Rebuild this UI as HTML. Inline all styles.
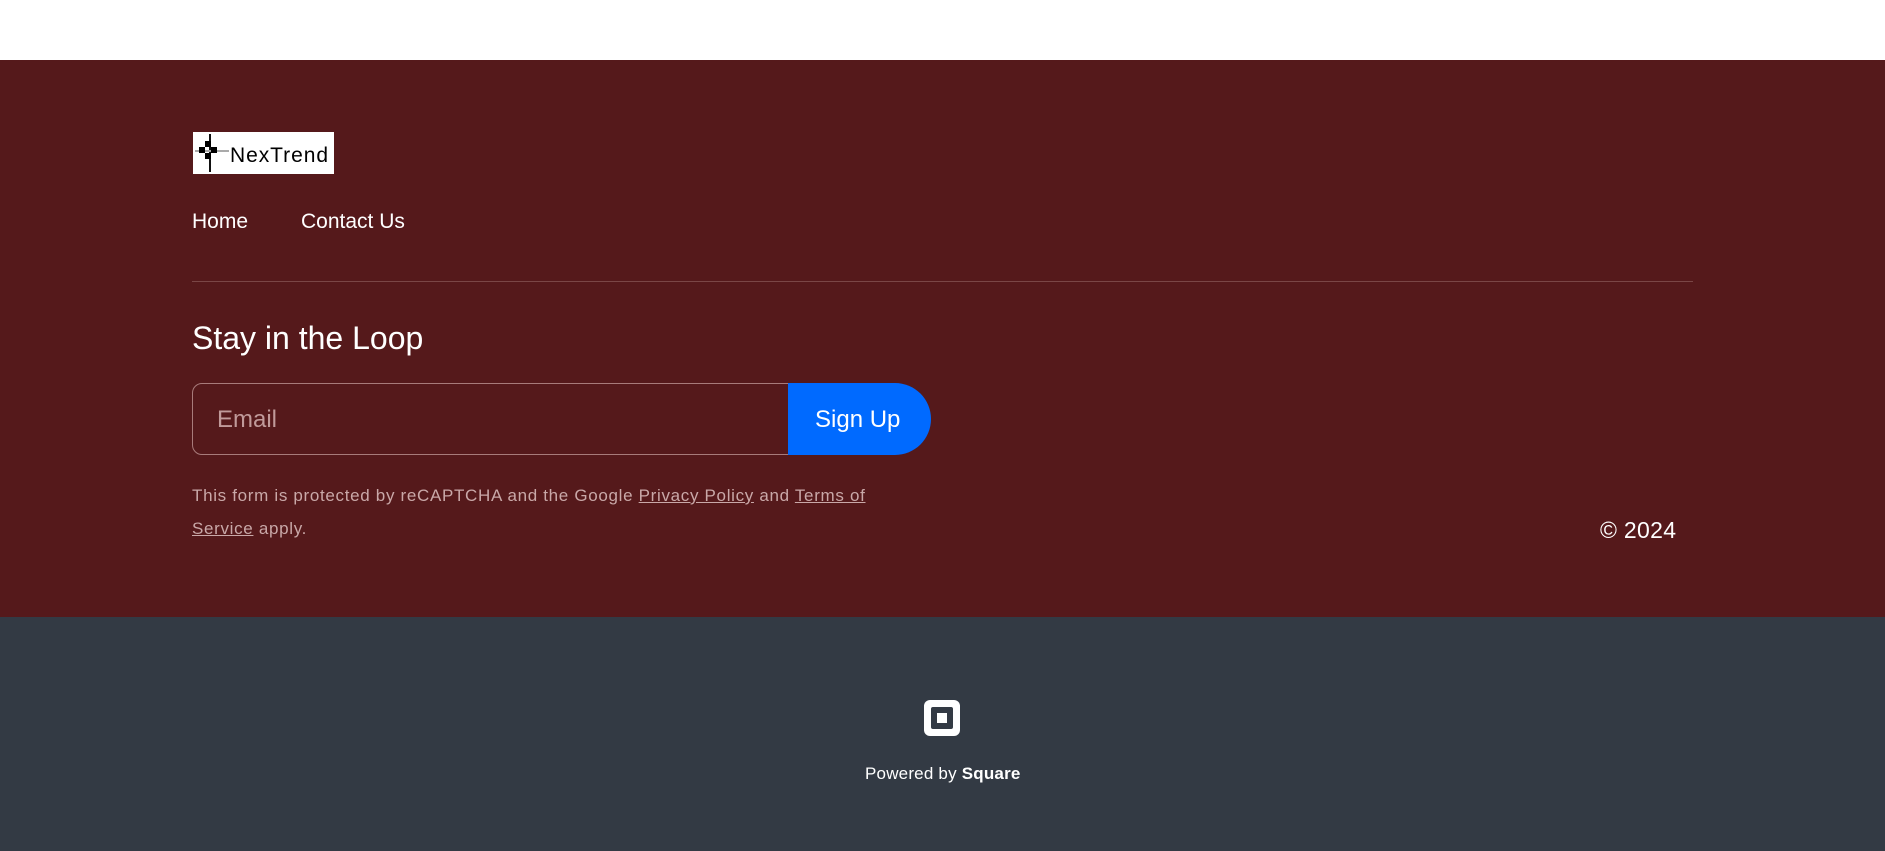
<!DOCTYPE html>
<html><head><meta charset="utf-8"><style>
*{margin:0;padding:0;box-sizing:border-box}
body{width:1885px;height:851px;background:#fff;font-family:"Liberation Sans",sans-serif;position:relative;overflow:hidden}
.red{position:absolute;top:60px;left:0;width:1885px;height:557px;background:#55191b}
.gray{position:absolute;top:617px;left:0;width:1885px;height:234px;background:#333a44}
.abs{position:absolute;white-space:nowrap}
.logo{left:193px;top:132px;width:141px;height:42px;background:#fff}
.nav{top:210px;font-size:21px;color:#fff}
.hr{left:192px;top:281px;width:1501px;height:1px;background:#7a4646}
.input{left:192px;top:383px;width:600px;height:72px;border:1px solid #a87b7b;border-radius:10px 0 0 10px}
.btn{left:788px;top:383px;width:143px;height:72px;background:#006aff;border-radius:0 36px 36px 0;color:#fff;font-size:24px;line-height:74px;padding-left:27px}
.small{font-size:17px;color:#c9a8a8;letter-spacing:0.68px}
.small u{text-decoration:underline}
</style></head><body>
<div class="red"></div><div class="gray"></div>
<div class="abs logo">
<svg width="141" height="42" viewBox="0 0 141 42">
<rect x="16" y="2" width="2" height="38" fill="#111"/><rect x="2" y="18" width="34" height="2" fill="#aaa"/>
<rect x="12" y="9" width="6" height="6" fill="#000"/><rect x="18" y="15" width="6" height="6" fill="#000"/><rect x="12" y="21" width="6" height="6" fill="#000"/><rect x="6" y="15" width="6" height="6" fill="#000"/>
<text x="37" y="30" font-family="Liberation Sans" font-size="21" fill="#000" textLength="98">NexTrend</text>
</svg></div>
<div class="abs nav" style="left:192px">Home</div>
<div class="abs nav" style="left:301px">Contact Us</div>
<div class="abs hr"></div>
<div class="abs" style="left:192px;top:320px;font-size:32px;color:#fff">Stay in the Loop</div>
<div class="abs input"><span style="position:absolute;left:24px;top:22px;font-size:24px;color:#c09a9a">Email</span></div>
<div class="abs btn">Sign Up</div>
<div class="abs small" style="left:192px;top:486px">This form is protected by reCAPTCHA and the Google <u>Privacy Policy</u> and <u>Terms of</u></div>
<div class="abs small" style="left:192px;top:519px"><u>Service</u> apply.</div>
<div class="abs" style="left:1600px;top:517px;font-size:23px;color:#fff;letter-spacing:0.3px">© 2024</div>
<svg class="abs" style="left:924px;top:700px" width="36" height="36" viewBox="0 0 36 36"><rect x="0" y="0" width="36" height="36" rx="6" fill="#fff"/><rect x="7" y="7" width="22" height="22" rx="2" fill="#333a44"/><rect x="13" y="13" width="10" height="10" fill="#fff"/></svg>
<div class="abs" style="left:865px;top:764px;font-size:17px;color:#fff;letter-spacing:0.2px">Powered by <b>Square</b></div>
</body></html>
